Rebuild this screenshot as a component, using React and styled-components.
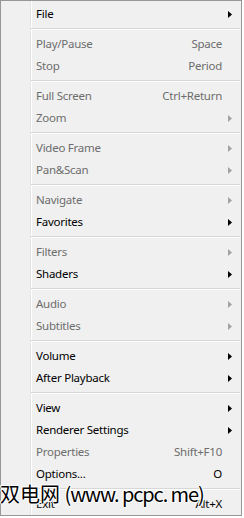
import React from "react";
import styled, { createGlobalStyle } from "styled-components";

const items = [
  { label: "File", sub: true },
  "sep",
  { label: "Play/Pause", key: "Space", off: true },
  { label: "Stop", key: "Period", off: true },
  "sep",
  { label: "Full Screen", key: "Ctrl+Return", off: true },
  { label: "Zoom", sub: true, off: true },
  "sep",
  { label: "Video Frame", sub: true, off: true },
  { label: "Pan&Scan", sub: true, off: true },
  "sep",
  { label: "Navigate", sub: true, off: true },
  { label: "Favorites", sub: true },
  "sep",
  { label: "Filters", sub: true, off: true },
  { label: "Shaders", sub: true },
  "sep",
  { label: "Audio", sub: true, off: true },
  { label: "Subtitles", sub: true, off: true },
  "sep",
  { label: "Volume", sub: true },
  { label: "After Playback", sub: true },
  "sep",
  { label: "View", sub: true },
  { label: "Renderer Settings", sub: true },
  { label: "Properties", key: "Shift+F10", off: true },
  { label: "Options...", key: "O" },
  "sep",
  { label: "Exit", key: "Alt+X" },
];

export default function App() {
  return (
    <>
      <GlobalStyle />
      <Page>
        <Menu>
          {items.map((it, i) =>
            it === "sep" ? (
              <Separator key={i} />
            ) : (
              <Row key={i} off={it.off}>
                <Label>{it.label}</Label>
                <Shortcut>{it.key}</Shortcut>
                <ArrowCell>
                  {it.sub && (
                    <svg width="4" height="7" viewBox="0 0 4 7">
                      <path d="M0 0 L4 3.5 L0 7 Z" fill={it.off ? "#a3a3a3" : "#000"} />
                    </svg>
                  )}
                </ArrowCell>
              </Row>
            )
          )}
        </Menu>
        <Watermark>
          双电网 <WatermarkUrl>(www. pcpc. me)</WatermarkUrl>
        </Watermark>
      </Page>
    </>
  );
}

const GlobalStyle = createGlobalStyle`
  body {
    margin: 0;
    background: #fff;
  }
`;

const Page = styled.div`
  position: relative;
  width: 244px;
  height: 518px;
  overflow: hidden;
`;

const Menu = styled.div`
  box-sizing: border-box;
  width: 242px;
  height: 516px;
  border: 1px solid #979797;
  padding: 2px 0 0;
  background: linear-gradient(
    to right,
    #f0f0f0 0 29px,
    #e2e3e3 29px 30px,
    #ffffff 30px 31px,
    #f0f0f0 31px
  );
  font-family: "Noto Sans", "Open Sans", sans-serif;
  font-size: 11.5px;
  letter-spacing: -0.25px;
`;

const Row = styled.div`
  box-sizing: border-box;
  display: grid;
  grid-template-columns: 1fr auto 19px;
  align-items: center;
  height: 22px;
  padding: 0 0 2px 35px;
  color: ${(p) => (p.off ? "#6d6d6d" : "#000")};
`;

const Label = styled.span`
  white-space: nowrap;
`;

const Shortcut = styled.span`
  white-space: nowrap;
`;

const ArrowCell = styled.span`
  display: flex;
  align-items: center;
  padding: 2px 0 0 6px;
  height: 100%;
`;

const Separator = styled.div`
  height: 8px;
  margin: 0 1px 0 30px;
  display: flex;
  align-items: center;
  &::after {
    content: "";
    flex: 1;
    height: 0;
    border-top: 1px solid #d7d7d7;
    border-bottom: 1px solid #fff;
  }
`;

const Watermark = styled.div`
  position: absolute;
  left: 0;
  top: 482px;
  font-family: "Noto Sans CJK SC", sans-serif;
  font-size: 20px;
  line-height: 24px;
  color: #000;
  white-space: nowrap;
  text-shadow: 1px 0 #fff, -1px 0 #fff, 0 1px #fff, 0 -1px #fff, 1px 1px #fff,
    -1px -1px #fff;
`;

const WatermarkUrl = styled.span`
  letter-spacing: -1.1px;
`;
